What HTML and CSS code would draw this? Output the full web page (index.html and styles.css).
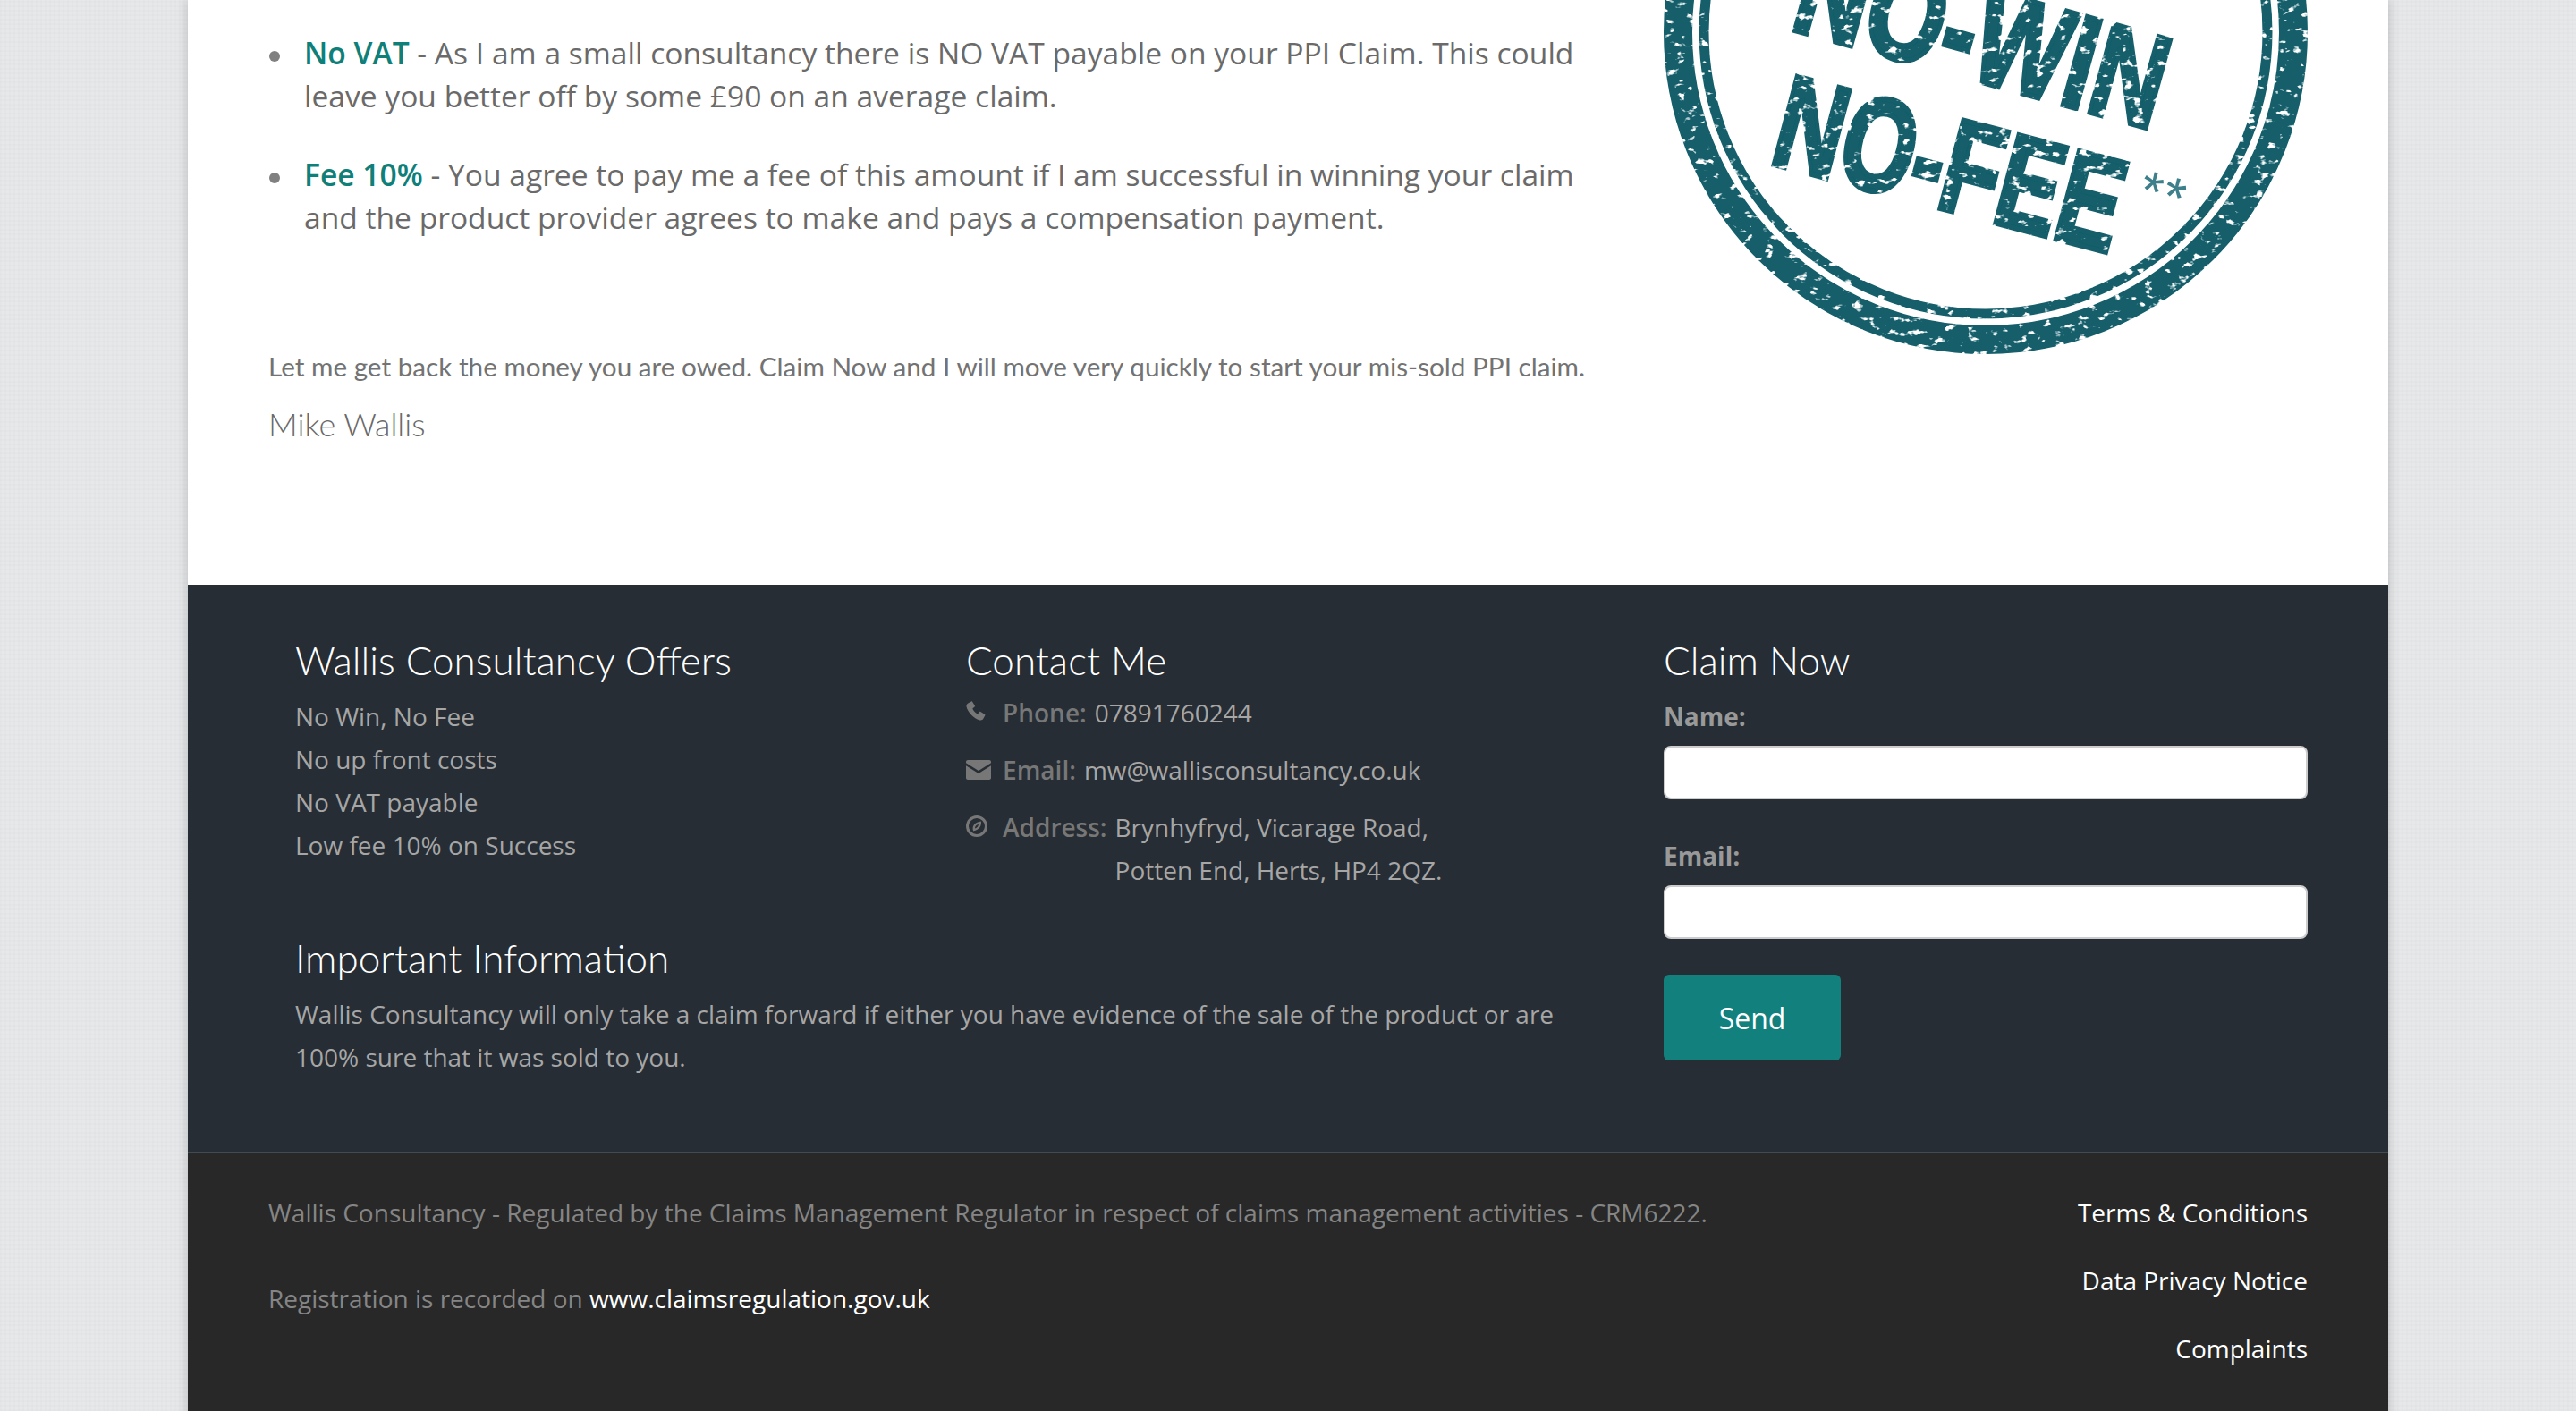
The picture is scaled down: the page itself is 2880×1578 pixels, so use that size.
FILE: index.html

```html
<!DOCTYPE html>
<html lang="en">
<head>
  <meta charset="UTF-8" />
  <title>Wallis Consultancy | PPI Claims</title>
  <link rel="stylesheet" href="styles.css">
</head>
<body>
<div class="page">
  <section class="intro">
    <div class="intro-text">
      <ul class="points">
        <li><strong>No VAT</strong> - As I am a small consultancy there is NO VAT payable on your PPI Claim. This could leave you better off by some £90 on an average claim.</li>
        <li><strong>Fee 10%</strong> - You agree to pay me a fee of this amount if I am successful in winning your claim and the product provider agrees to make and pays a compensation payment.</li>
      </ul>
      <p class="closing">Let me get back the money you are owed. Claim Now and I will move very quickly to start your mis-sold PPI claim.</p>
      <p class="signature">Mike Wallis</p>
    </div>
    <svg class="stamp" viewBox="0 0 720 396" width="720" height="396">
      <defs>
        <filter id="worn" x="-5%" y="-5%" width="110%" height="110%">
          <feTurbulence type="fractalNoise" baseFrequency="0.08 0.13" numOctaves="3" seed="7" result="noise" />
          <feColorMatrix in="noise" type="matrix" values="0 0 0 0 0  0 0 0 0 0  0 0 0 0 0  0 0 0 -9 6.6" result="mask" />
          <feComposite in="SourceGraphic" in2="mask" operator="in" />
          <feGaussianBlur stdDeviation="0.7" />
        </filter>
      </defs>
      <g class="stamp-ink" filter="url(#worn)">
        <circle class="ring-thick" cx="360" cy="36" r="344" />
        <circle class="ring-thin" cx="360" cy="36" r="315" />
        <text class="stamp-word" x="139" y="32" transform="rotate(15.5 139 32)" textLength="423" lengthAdjust="spacingAndGlyphs">NO-WIN</text>
        <text class="stamp-word" x="116" y="182" transform="rotate(14.8 116 182)" textLength="396" lengthAdjust="spacingAndGlyphs">NO-FEE</text>
      </g>
      <text class="stamp-stars" x="528" y="231" transform="rotate(15 528 231)">**</text>
    </svg>
  </section>

  <section class="footer-main">
    <div class="offers">
      <h3>Wallis Consultancy Offers</h3>
      <ul class="offer-list">
        <li>No Win, No Fee</li>
        <li>No up front costs</li>
        <li>No VAT payable</li>
        <li>Low fee 10% on Success</li>
      </ul>
    </div>
    <div class="contact">
      <h3>Contact Me</h3>
      <div class="contact-row">
        <svg class="icon icon-phone" viewBox="0 0 24 24"><path d="M6.500.5 2.400 2.600C.9 3.400.2 5.100.6 7.200c1.200 6.200 9.800 15.100 16.300 16.200 1.900.3 3.500-.4 4.200-1.800l2.100-4c.3-.6.1-1.100-.4-1.500l-5-3c-.5-.3-1-.2-1.400.2l-1.700 2.100c-.3.4-.7.400-1.200.2-2-1.200-4.300-3.700-5.300-5.800-.2-.5-.2-.9.300-1.200l2-1.600c.5-.4.500-.9.300-1.400L7.900 1c-.3-.6-.8-.8-1.400-.5z"/></svg>
        <span class="contact-label">Phone:</span>
        <span>07891760244</span>
      </div>
      <div class="contact-row">
        <svg class="icon icon-mail" viewBox="0 0 28 22"><path d="M2 0h24c1.100 0 2 .9 2 2v1.200L14 12 0 3.200V2C0 .9.900 0 2 0z"/><path d="M0 6.200 14 15 28 6.200V20c0 1.100-.9 2-2 2H2c-1.100 0-2-.9-2-2z"/></svg>
        <span class="contact-label">Email:</span>
        <span>mw@wallisconsultancy.co.uk</span>
      </div>
      <div class="contact-row">
        <svg class="icon icon-compass" viewBox="0 0 24 24"><path fill-rule="evenodd" d="M12 0a12 12 0 1 1 0 24 12 12 0 0 1 0-24zm0 3a9 9 0 1 0 0 18 9 9 0 0 0 0-18z"/><path fill-rule="evenodd" d="M17 6.500c.4 5-1.600 9.300-8.800 11C6 12 10 7 17 6.500zm-3 3.200c-2.500.6-4.200 2.500-4 4.800 2.500-.7 3.800-2.500 4-4.800z"/></svg>
        <span class="contact-label">Address:</span>
        <span>Brynhyfryd, Vicarage Road,<br>Potten End, Herts, HP4 2QZ.</span>
      </div>
    </div>
    <form class="claim">
      <h3>Claim Now</h3>
      <label for="claim-name">Name:</label>
      <input id="claim-name" type="text">
      <label for="claim-email">Email:</label>
      <input id="claim-email" type="email">
      <button type="button">Send</button>
    </form>
    <div class="info">
      <h3>Important Information</h3>
      <p>Wallis Consultancy will only take a claim forward if either you have evidence of the sale of the product or are 100% sure that it was sold to you.</p>
    </div>
  </section>

  <section class="footer-bottom">
    <div class="legal">
      <p>Wallis Consultancy - Regulated by the Claims Management Regulator in respect of claims management activities - CRM6222.</p>
      <p>Registration is recorded on <a href="#">www.claimsregulation.gov.uk</a></p>
    </div>
    <nav class="legal-links">
      <a href="#">Terms &amp; Conditions</a>
      <a href="#">Data Privacy Notice</a>
      <a href="#">Complaints</a>
    </nav>
  </section>
</div>
</body>
</html>
```

FILE: styles.css

```css
html, body {
  height: 100%;
}
body {
  margin: 0;
  overflow: hidden;
  font-family: "Open Sans", sans-serif;
  font-size: 28px;
  line-height: 48px;
  color: #6a6a6a;
  background-color: #e6e8ea;
  background-image:
    repeating-linear-gradient(0deg, rgba(0,0,0,0.01) 0 2px, transparent 2px 5px),
    repeating-linear-gradient(90deg, rgba(0,0,0,0.01) 0 2px, transparent 2px 5px);
}
h3, p, ul {
  margin: 0;
  padding: 0;
}
ul {
  list-style: none;
}
a {
  color: #fff;
  text-decoration: none;
}

.page {
  width: 2460px;
  margin: 0 auto;
  box-shadow: 0 0 12px rgba(0,0,0,0.2);
}

/* white part */
.intro {
  display: grid;
  grid-template-columns: 1fr 720px;
  column-gap: 30px;
  height: 654px;
  padding: 0 90px;
  box-sizing: border-box;
  background: #fff;
}
.intro-text {
  padding-top: 35px;
}
.points {
  padding: 0 40px;
  font-size: 33.6px;
}
.points li {
  margin-bottom: 40px;
}
.points li::before {
  content: "";
  display: inline-block;
  width: 12px;
  height: 12px;
  margin: 0 27px 0 -39px;
  vertical-align: middle;
  background: #808080;
  border-radius: 50%;
}
.points strong {
  font-weight: 600;
  color: #0f7f7a;
}
.closing {
  margin-top: 119px;
  font-family: "Lato", sans-serif;
  font-size: 29.7px;
  color: #737373;
}
.signature {
  margin-top: 10px;
  font-family: "Lato", sans-serif;
  font-weight: 300;
  font-size: 36px;
  line-height: 60px;
}

/* stamp */
.stamp {
  display: block;
}
.ring-thick,
.ring-thin {
  fill: none;
  stroke: #125e6b;
}
.ring-thick {
  stroke-width: 32;
}
.ring-thin {
  stroke-width: 11;
}
.stamp-word {
  font-family: "Liberation Sans", sans-serif;
  font-weight: 700;
  font-size: 148px;
  fill: #125e6b;
  stroke: #125e6b;
  stroke-width: 6;
}
.stamp-stars {
  font-family: "Liberation Sans", sans-serif;
  font-size: 62px;
  letter-spacing: 2px;
  fill: #3d7f8b;
}

/* dark part */
.footer-main {
  display: grid;
  grid-template-columns: 750px 780px 720px;
  padding: 59px 90px 82px 120px;
  background: #262d34;
  color: #a6a6a6;
  border-bottom: 2px solid #3f4c54;
}
.footer-main h3 {
  font-family: "Lato", sans-serif;
  font-weight: 300;
  font-size: 44px;
  line-height: 50px;
  color: #fff;
}
.offer-list {
  margin-top: 14px;
}
.contact h3 {
  margin-bottom: 10px;
}
.contact-row {
  display: flex;
  margin-bottom: 16px;
}
.contact-label {
  margin-right: 9px;
  font-weight: 600;
  color: #777;
}
.icon {
  flex: none;
  fill: #777;
}
.icon-phone {
  width: 22px;
  height: 22px;
  margin: 11px 19px 0 0;
}
.icon-mail {
  width: 28px;
  height: 22px;
  margin: 13px 13px 0 0;
}
.icon-compass {
  width: 24px;
  height: 24px;
  margin: 11px 17px 0 0;
}
.claim {
  grid-row: 1 / 3;
  grid-column: 3;
}
.claim h3 {
  margin-bottom: 14px;
}
.claim label {
  display: block;
  margin-bottom: 9px;
  font-weight: 700;
  color: #999;
}
.claim input {
  display: block;
  width: 100%;
  height: 60px;
  margin-bottom: 39px;
  box-sizing: border-box;
  background: #fff;
  border: 2px solid #ccc;
  border-radius: 8px;
}
.claim input:last-of-type {
  margin-bottom: 40px;
}
.claim button {
  display: block;
  width: 198px;
  height: 96px;
  padding: 0;
  font-family: "Open Sans", sans-serif;
  font-size: 32px;
  color: #fff;
  background: #12807c;
  border: 0;
  border-radius: 6px;
}
.info {
  grid-column: 1 / 3;
  margin-top: 33px;
  padding-right: 60px;
}
.info h3 {
  margin-bottom: 14px;
}

/* very bottom */
.footer-bottom {
  display: flex;
  justify-content: space-between;
  padding: 42px 90px 60px;
  background: #282828;
  color: #858585;
}
.legal p + p {
  margin-top: 48px;
}
.legal-links {
  display: flex;
  flex-direction: column;
  align-items: flex-end;
  row-gap: 28px;
}
```
